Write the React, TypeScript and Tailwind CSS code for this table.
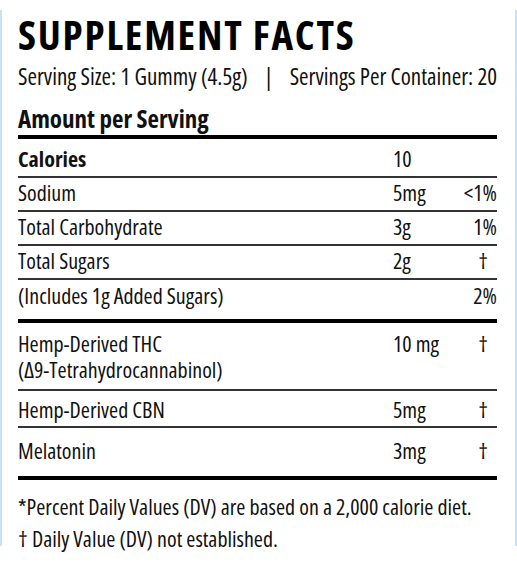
import React from "react";

type Row = {
  name: string;
  sub?: string;
  amount?: string;
  dv?: string;
  bold?: boolean;
  box: string;
  line: "thin" | "thick";
};

// heights and bottom padding tuned so the rules land where the label has them
const rows: Row[] = [
  { name: "Calories", amount: "10", bold: true, box: "h-[37px] items-center", line: "thin" },
  { name: "Sodium", amount: "5mg", dv: "<1%", box: "h-[32px] items-center pb-[5px]", line: "thin" },
  { name: "Total Carbohydrate", amount: "3g", dv: "1%", box: "h-[32px] items-center pb-[5px]", line: "thin" },
  { name: "Total Sugars", amount: "2g", dv: "†", box: "h-[32px] items-center pb-[5px]", line: "thin" },
  { name: "(Includes 1g Added Sugars)", dv: "2%", box: "h-[39px] items-center pb-[9px]", line: "thick" },
  {
    name: "Hemp-Derived THC",
    sub: "(Δ9-Tetrahydrocannabinol)",
    amount: "10 mg",
    dv: "†",
    box: "h-[66px] items-start pt-[7px]",
    line: "thin",
  },
  { name: "Hemp-Derived CBN", amount: "5mg", dv: "†", box: "h-[35px] items-center", line: "thin" },
  { name: "Melatonin", amount: "3mg", dv: "†", box: "h-[48px] items-center pb-[5px]", line: "thick" },
];

const font = "font-['Open_Sans','Noto_Sans',sans-serif] [font-stretch:75%]";

export default function App() {
  return (
    <div className={`w-[517px] h-[565px] bg-white text-[#111] ${font}`}>
      <div className="mt-[10px] h-[536px] border-x-2 border-[#c4e2f8] pl-[16px] pr-[18px]">
        {/* Header */}
        <h1 className="pt-[4px] text-[41px] font-bold leading-none tracking-[1.8px] text-black">
          SUPPLEMENT FACTS
        </h1>
        <div className="mt-[9px] flex items-center justify-between whitespace-nowrap text-[23px] font-medium leading-[24px]">
          <span>Serving Size: 1 Gummy (4.5g)</span>
          <span>|</span>
          <span>Servings Per Container: 20</span>
        </div>
        <div className="mt-[18px] pb-[4px] text-[25px] font-bold leading-[25px]">
          Amount per Serving
        </div>
        <div className="h-[4px] bg-black" />

        {/* Rows */}
        {rows.map((row) => (
          <div key={row.name}>
            <div
              className={`grid grid-cols-[375px_1fr_auto] ${row.box} whitespace-nowrap text-[22px] leading-[26px] ${
                row.bold ? "font-bold" : "font-medium"
              }`}
            >
              <div>
                <div>{row.name}</div>
                {row.sub && <div>{row.sub}</div>}
              </div>
              <div className="font-medium">{row.amount}</div>
              <div className={`text-right font-medium ${row.dv === "†" ? "pr-[9px]" : ""}`}>{row.dv}</div>
            </div>
            <div className={row.line === "thick" ? "h-[4px] bg-black" : "h-[2px] bg-[#333]"} />
          </div>
        ))}

        {/* Footnotes */}
        <div className="mt-[10px] whitespace-nowrap text-[22px] font-medium leading-[32px]">
          <p>*Percent Daily Values (DV) are based on a 2,000 calorie diet.</p>
          <p>† Daily Value (DV) not established.</p>
        </div>
      </div>
    </div>
  );
}
